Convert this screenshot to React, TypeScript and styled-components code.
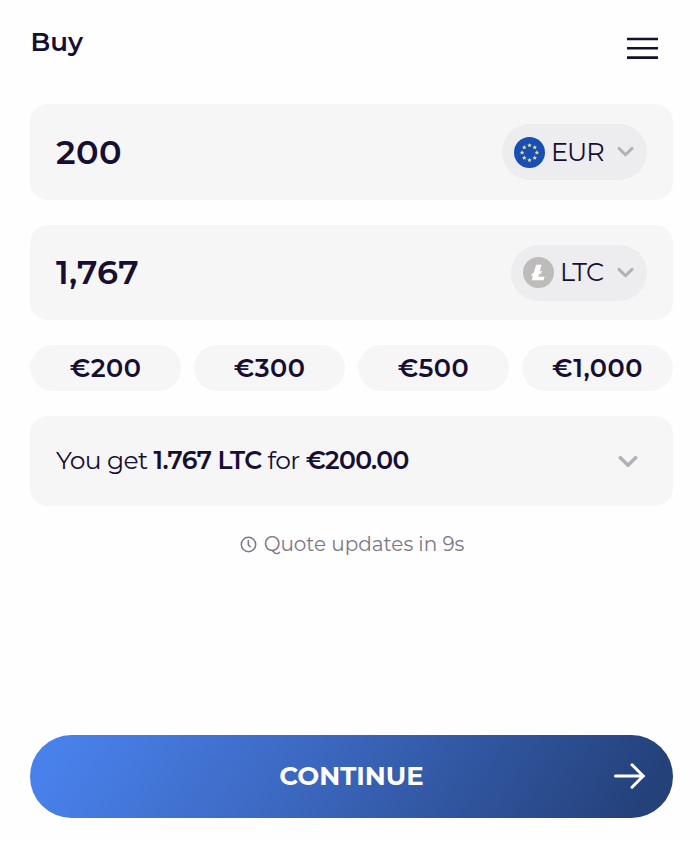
import React from "react";
import styled, { createGlobalStyle } from "styled-components";

const ink = "#170f33";

const GlobalStyle = createGlobalStyle`
  * { box-sizing: border-box; }
  body { margin: 0; background: #fefefe; }
  button { font: inherit; color: inherit; border: 0; padding: 0; cursor: pointer; }
`;

const Page = styled.main`
  width: 700px;
  height: 841px;
  padding: 0 27px 23px 30px;
  display: flex;
  flex-direction: column;
  color: ${ink};
  font-family: Montserrat, Inter, sans-serif;
`;

const Header = styled.header`
  height: 104px;
  display: flex;
  justify-content: space-between;
  padding: 26px 15px 0 0.5px;
`;

const Title = styled.h1`
  margin: 0;
  font-size: 26px;
  line-height: 32px;
  font-weight: 600;
  letter-spacing: 0;
`;

const MenuButton = styled.button`
  width: 31px;
  height: 23px;
  margin-top: 11px;
  background: none;
  svg { display: block; }
`;

const AmountCard = styled.section<{ $height: number }>`
  height: ${(p) => p.$height}px;
  flex: none;
  display: flex;
  align-items: center;
  justify-content: space-between;
  padding: 0 26px;
  margin-bottom: 25px;
  border-radius: 18px;
  background: #f6f6f7;
`;

const Amount = styled.span<{ $tracking: number }>`
  font-size: 33.5px;
  line-height: 42px;
  padding-bottom: 1px;
  font-weight: 600;
  letter-spacing: ${(p) => p.$tracking}px;
`;

const CurrencyButton = styled.button<{ $width: number }>`
  width: ${(p) => p.$width}px;
  height: 56px;
  display: flex;
  align-items: center;
  padding: 0 13px 0 12px;
  border-radius: 28px;
  background: #ededef;
  svg { flex: none; }
`;

const CurrencyCode = styled.span<{ $tracking: number }>`
  flex: 1;
  margin-left: 6px;
  padding-bottom: 2px;
  text-align: left;
  font-size: 25.5px;
  font-weight: 400;
  letter-spacing: ${(p) => p.$tracking}px;
`;

const Presets = styled.div`
  display: grid;
  grid-template-columns: repeat(4, 1fr);
  column-gap: 12.7px;
  margin-bottom: 25px;
`;

const Preset = styled.button`
  height: 46px;
  padding-bottom: 2px;
  border-radius: 23px;
  background: #f6f6f7;
  font-size: 25.5px;
  font-weight: 600;
  letter-spacing: 0.5px;
`;

const Summary = styled.section`
  height: 90px;
  flex: none;
  display: flex;
  align-items: center;
  justify-content: space-between;
  padding: 0 35px 0 26px;
  border-radius: 18px;
  background: #f6f6f7;
`;

const SummaryText = styled.p`
  margin: 0;
  padding-bottom: 2px;
  white-space: nowrap;
  font-size: 25px;
  font-weight: 400;
  letter-spacing: -0.6px;
  strong { font-weight: 600; }
`;

const Quote = styled.div`
  display: flex;
  align-items: center;
  justify-content: center;
  gap: 7px;
  height: 26px;
  margin-top: 25px;
  padding-left: 1px;
  color: #7b7785;
  font-size: 20px;
  letter-spacing: -0.02px;
  white-space: nowrap;
`;

const Continue = styled.button`
  height: 83px;
  margin-top: auto;
  padding-bottom: 2px;
  flex: none;
  display: grid;
  grid-template-columns: 60px 1fr 60px;
  align-items: center;
  border-radius: 42px;
  background: linear-gradient(122deg, #4981eb 5%, #3b66bd 45%, #24417a 94%);
  color: #fff;
  font-size: 26px;
  font-weight: 700;
  letter-spacing: 0;
`;

const ContinueLabel = styled.span`
  grid-column: 2;
`;

const Chevron = ({ width = 17 }: { width?: number }) => (
  <svg width={width} height={width * 0.65} viewBox="0 0 17 11" fill="none">
    <path d="M2 2.3 8.5 8.7 15 2.3" stroke="#b2b1b8" strokeWidth="3" strokeLinecap="round" strokeLinejoin="round" />
  </svg>
);

const EuroFlag = () => (
  <svg width="31" height="31" viewBox="0 0 31 31">
    <circle cx="15.5" cy="15.5" r="15.5" fill="#194fb2" />
    {Array.from({ length: 8 }, (_, i) => (
      <path
        key={i}
        transform={`translate(${15.5 + 7.4 * Math.sin((i * Math.PI) / 4)} ${15.5 - 7.4 * Math.cos((i * Math.PI) / 4)})`}
        d="M0-2.2 .7-.7 2.2-.5 1.1 .6 1.4 2 0 1.3-1.4 2-1.1 .6-2.2-.5-.7-.7Z"
        fill="#e9dc92"
      />
    ))}
  </svg>
);

const Litecoin = () => (
  <svg width="31" height="31" viewBox="0 0 31 31">
    <circle cx="15.5" cy="15.5" r="15.5" fill="#bdbcba" />
    <path d="M13.1 7.7h5.5l-1.9 6.9 2.2-.8-.7 2.6-2.2.8-.7 2.5h6.2l-.9 3.5H8.7l1.3-4.6-1.7.6.7-2.6 1.7-.6Z" fill="#fff" />
  </svg>
);

const presets = ["€200", "€300", "€500", "€1,000"];

export default function App() {
  return (
    <>
      <GlobalStyle />
      <Page>
        <Header>
          <Title>Buy</Title>
          <MenuButton aria-label="Menu">
            <svg width="31" height="23" viewBox="0 0 31 23">
              <path d="M0 2h31M0 11.3h31M0 20.6h31" stroke={ink} strokeWidth="2.6" />
            </svg>
          </MenuButton>
        </Header>
        <AmountCard $height={96}>
          <Amount $tracking={0.5}>200</Amount>
          <CurrencyButton $width={145}>
            <EuroFlag />
            <CurrencyCode $tracking={-1}>EUR</CurrencyCode>
            <Chevron />
          </CurrencyButton>
        </AmountCard>
        <AmountCard $height={95}>
          <Amount $tracking={0.3}>1,767</Amount>
          <CurrencyButton $width={136}>
            <Litecoin />
            <CurrencyCode $tracking={-0.7}>LTC</CurrencyCode>
            <Chevron />
          </CurrencyButton>
        </AmountCard>
        <Presets>
          {presets.map((label) => (
            <Preset key={label}>{label}</Preset>
          ))}
        </Presets>
        <Summary>
          <SummaryText>
            You get <strong>1.767 LTC</strong> for <strong>€200.00</strong>
          </SummaryText>
          <Chevron width={20} />
        </Summary>
        <Quote>
          <svg width="17" height="17" viewBox="0 0 17 17" fill="none" stroke="currentColor" strokeWidth="1.5" strokeLinecap="round" strokeLinejoin="round">
            <circle cx="8.5" cy="8.5" r="7.2" />
            <path d="M8.3 4.5v4.3l1.9 2" />
          </svg>
          <span>Quote updates in 9s</span>
        </Quote>
        <Continue>
          <ContinueLabel>CONTINUE</ContinueLabel>
          <svg width="32" height="26" viewBox="0 0 32 26" fill="none" stroke="#fff" strokeWidth="3" strokeLinecap="round" strokeLinejoin="round">
            <path d="M2.5 13h28M19 1.8 30.2 13 19 24.2" />
          </svg>
        </Continue>
      </Page>
    </>
  );
}
